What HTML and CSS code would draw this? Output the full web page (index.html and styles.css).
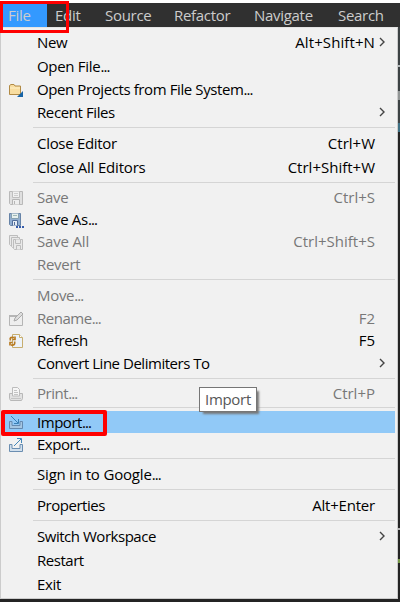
FILE: index.html
```
<!DOCTYPE html>
<html lang="en">
<head>
<meta charset="utf-8">
<title>File menu</title>
<link rel="stylesheet" href="styles.css">
</head>
<body>
<div class="window">
  <nav class="bar">
    <span class="tab open">File</span><span class="tab edit">Edit</span><span class="tab source">Source</span><span class="tab refactor">Refactor</span><span class="tab navigate">Navigate</span><span class="tab search">Search</span>
  </nav>
  <div class="mark mark-file"></div>
  <div class="menu">
    <div class="row"><i></i><span>New</span><kbd class="new">Alt+Shift+N</kbd><svg class="arrow" viewBox="0 0 6 10"><path d="M1 1l4 4-4 4"/></svg></div>
    <div class="row"><i></i><span>Open File<b>...</b></span></div>
    <div class="row mid raised"><i><svg class="icon" viewBox="0 0 16 16"><path d="M1.5 12.5V3.5L3 2.5h3l1 1.5h5.5v8.5z" fill="#f8dda0" stroke="#b18a45"/><path d="M2 6h10" stroke="#fff1c8"/><path d="M15 9v6H9z" fill="#1763a5"/></svg></i><span class="narrow">Open Projects from File System<b>...</b></span></div>
    <div class="row mid raised"><i></i><span class="narrow">Recent Files</span><svg class="arrow" viewBox="0 0 6 10"><path d="M1 1l4 4-4 4"/></svg></div>
    <hr>
    <div class="row"><i></i><span>Close Editor</span><kbd>Ctrl+W</kbd></div>
    <div class="row"><i></i><span class="wide">Close All Editors</span><kbd>Ctrl+Shift+W</kbd></div>
    <hr>
    <div class="row low off"><i><svg class="icon" viewBox="0 0 16 16"><path d="M1.5 1.5h13v13h-12l-1-1z" fill="#e0e0e0" stroke="#b9b9b9"/><path d="M4.500 1.500v6h7v-6" fill="#f1f1f1" stroke="#bebebe"/><path d="M6 3.500h4M6 5.500h4" stroke="#cecece"/><path d="M4.500 14.500v-5h7v5M6.500 11v3" fill="#eee" stroke="#b5b5b5"/></svg></i><span>Save</span><kbd>Ctrl+S</kbd></div>
    <div class="row low"><i><svg class="icon" viewBox="0 0 16 16"><path d="M1.500 1.500h11v12h-10l-1-1z" fill="#91aed0" stroke="#6683a7"/><path d="M3.500 1.500v5h7v-5" fill="#e7f0ee" stroke="#86a1af"/><path d="M5 3.500h4" stroke="#9db7b6"/><path d="M4.500 13.500v-5h5v5M6.500 10v3" fill="#e7eef6" stroke="#526e9a"/><path d="M8 15h2m1 0h2m1 0h2" stroke="#365caa" stroke-width="2"/></svg></i><span>Save As<b>...</b></span></div>
    <div class="row low off"><i><svg class="icon" viewBox="0 0 16 16"><g fill="#e9e9e9" stroke="#bdbdbd"><path d="M1.500 1.500h8v10h-7l-1-1z"/><path d="M3.500 3.500h8v10h-7l-1-1z"/><path d="M5.500 5.500h9v10h-8l-1-1z"/><path d="M7.500 5.500v4h5v-4M8.500 15.500v-4h4v4"/></g></svg></i><span class="wide">Save All</span><kbd>Ctrl+Shift+S</kbd></div>
    <div class="row off"><i></i><span>Revert</span></div>
    <hr>
    <div class="row off"><i></i><span>Move<b>...</b></span></div>
    <div class="row low off"><i><svg class="icon" viewBox="0 0 16 16"><path d="M1.500 4.500h13v10h-13z" fill="#eee" stroke="#b5b5b5"/><path d="M1 5h9" stroke="#b5b5b5" stroke-width="2"/><path d="M6 10l1-3 6-6 2 2-6 6z" fill="#ddd" stroke="#aaa"/></svg></i><span class="narrower">Rename<b>...</b></span><kbd>F2</kbd></div>
    <div class="row low"><i><svg class="icon" viewBox="0 0 16 16"><path d="M4.500 1.500h7l3 3v10h-10z" fill="#edf3fa" stroke="#c7ae70"/><path d="M11.500 1.500v3h3" fill="#fff" stroke="#c7ae70"/><path d="M7 3.500v3H4.500M2.500 7.500Q1 3.500 6 4.500M2 12.500v-3h2.500M6.500 8.500Q8 12.500 3 12" fill="none" stroke="#b87b22" stroke-width="1.700"/></svg></i><span class="narrow">Refresh</span><kbd>F5</kbd></div>
    <div class="row"><i></i><span class="narrower">Convert Line Delimiters To</span><svg class="arrow" viewBox="0 0 6 10"><path d="M1 1l4 4-4 4"/></svg></div>
    <hr>
    <div class="row low off"><i><svg class="icon print" viewBox="0 0 16 16"><path d="M1.500 7.500h13v5l-1 2h-11l-1-2z" fill="#e2e2e2" stroke="#b8b8b8"/><path d="M4.500 10V1.500h5l2 2V10z" fill="#f6f6f6" stroke="#bcbcbc"/><path d="M6 4.500h3M6 6.500h4M6 8.500h4M3 12.500h10" stroke="#c4c4c4"/></svg></i><span class="narrower">Print<b>...</b></span><kbd>Ctrl+P</kbd></div>
    <hr class="tight">
    <div class="row low selected"><i><svg class="icon tray" viewBox="0 0 16 16"><path d="M4 7.500H1.500v7h13v-7H12v4H4z" fill="#a5c6e2" stroke="#6489af"/><path d="M3 2l7 7M10.500 5v4.500H6" fill="none" stroke="#397fb5"/></svg></i><span class="narrower">Import<b>...</b></span></div>
    <div class="row mid"><i><svg class="icon tray" viewBox="0 0 16 16"><path d="M4 7.500H1.500v7h13v-7H12v4H4z" fill="#d2e0ed" stroke="#6b8eb1"/><path d="M6 9l7-7M9 1.500h4.500V6" fill="none" stroke="#4387b9"/></svg></i><span class="narrower">Export<b>...</b></span></div>
    <hr>
    <div class="row"><i></i><span class="wide">Sign in to Google<b>...</b></span></div>
    <hr>
    <div class="row"><i></i><span class="narrower">Properties</span><kbd class="enter">Alt+Enter</kbd></div>
    <hr>
    <div class="row"><i></i><span class="narrower">Switch Workspace</span><svg class="arrow" viewBox="0 0 6 10"><path d="M1 1l4 4-4 4"/></svg></div>
    <div class="row"><i></i><span class="narrower">Restart</span></div>
    <div class="row"><i></i><span>Exit</span></div>
  </div>
  <div class="mark mark-import"></div>
  <div class="tip">Import</div>
</div>
</body>
</html>
```
FILE: styles.css
```
* { box-sizing: border-box; }
body { margin: 0; overflow: hidden; background: #fff; }
.window {
  position: relative;
  width: 400px;
  height: 602px;
  padding-top: 3px;
  font: 15px/22px "Open Sans", "Noto Sans", sans-serif;
  letter-spacing: -0.3px;
  background:
    linear-gradient(#b5bbbd, #b5bbbd) 398px 65px / 2px 2px no-repeat,
    linear-gradient(#929696, #929696) 398px 91px / 2px 9px no-repeat,
    linear-gradient(#3f7184, #3f7184) 398px 123px / 2px 9px no-repeat,
    linear-gradient(#b4b4b4, #b4b4b4) 398px 528px / 2px 2px no-repeat,
    linear-gradient(#779947, #779947) 398px 559px / 2px 4px no-repeat,
    linear-gradient(#fff, #fff) 0 0 / 400px 3px no-repeat,
    linear-gradient(#3c4244, #3c4244) 398px 27px / 2px 105px no-repeat,
    #242424;
}
.bar { display: flex; height: 24px; background: #303030; color: #ccc; white-space: nowrap; }
.tab { flex: none; line-height: 24px; }
.open { width: 47px; padding-left: 8px; background: #3399ff; }
.edit { width: 58px; padding-left: 8px; }
.source { width: 69px; }
.refactor { width: 80px; }
.navigate { width: 84px; }
.menu {
  width: 398px;
  height: 572px;
  padding: 3px 2px 0 0;
  border: 1px solid #ccc;
  border-top-color: #e4e4e4;
  background: #f1f1f1;
  color: #000;
}
.row { display: flex; align-items: center; height: 24px; white-space: nowrap; position: relative; }
.mid { height: 23px; }
.low { height: 22px; }
.row i { width: 36px; height: 16px; padding-left: 7px; flex: none; }
.icon { display: block; width: 16px; height: 16px; fill: none; }
.row span, .row kbd { padding-bottom: 2px; }
.row b { font-weight: inherit; letter-spacing: -0.9px; }
.row kbd { margin: 0 20px 0 auto; font: inherit; letter-spacing: 0; }
.row .enter { letter-spacing: -0.2px; }
.row .new { letter-spacing: 0.1px; }
.narrow { letter-spacing: -0.4px; }
.narrower { letter-spacing: -0.47px; }
.wide { letter-spacing: -0.18px; }
.row .arrow { position: absolute; right: 10px; top: 6px; width: 6px; height: 10px; fill: none; stroke: #444; stroke-width: 1.4; }
.off { color: #787878; }
.selected { background: #91c9f7; }
.selected span { padding-bottom: 0; }
.raised span { padding-bottom: 4px; }
.raised i { height: 18px; }
.raised .arrow { top: 5px; }
hr { height: 1px; margin: 2px 0 4px 32px; border: 0; background: #d5d5d5; }
.tight { margin-bottom: 3px; }
.mark { position: absolute; border: 4px solid #f00; }
.mark-file { left: 0; top: 1px; width: 69px; height: 32px; border-width: 3px; }
.mark-import { left: 1px; top: 410px; width: 106px; height: 26px; border-radius: 2px; }
.tip {
  position: absolute;
  left: 199px;
  top: 387px;
  width: 58px;
  height: 25px;
  padding-left: 5px;
  border: 1px solid #767676;
  background: #fff;
  box-shadow: 3px 3px 2px -1px #777;
  color: #575757;
  line-height: 23px;
}
```
